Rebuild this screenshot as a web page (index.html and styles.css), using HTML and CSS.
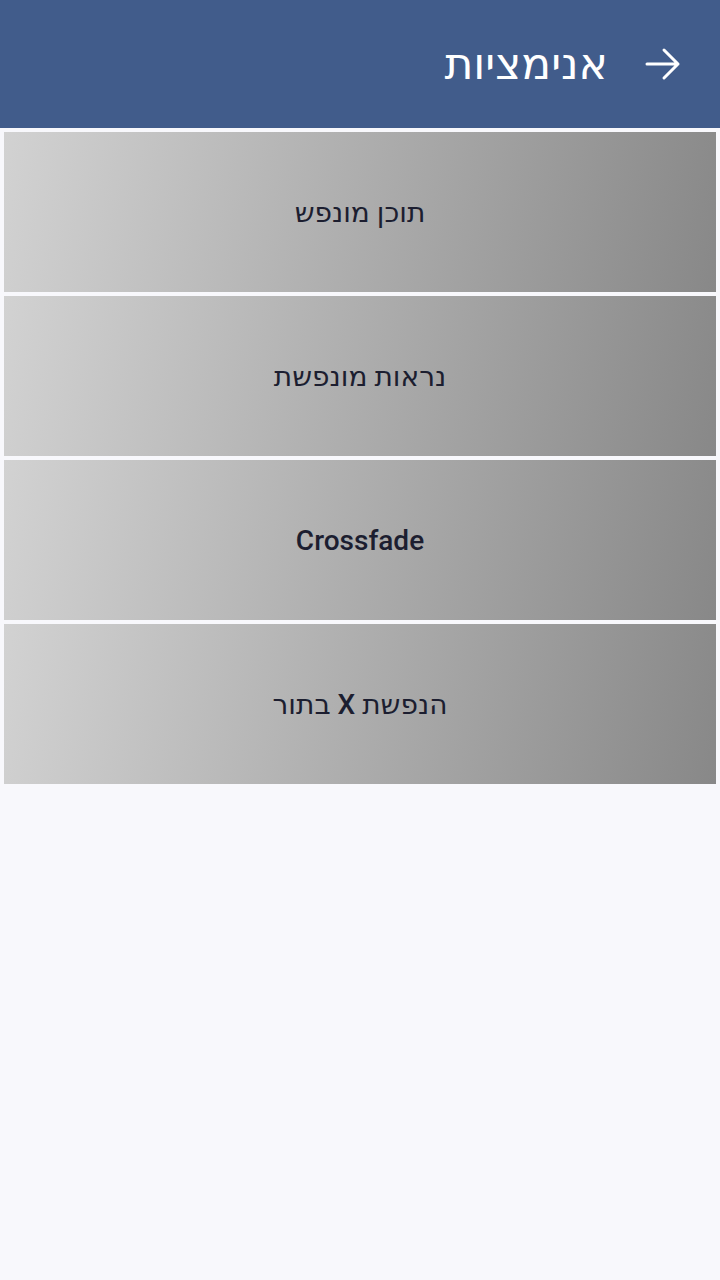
FILE: index.html
```html
<!DOCTYPE html>
<html lang="he" dir="rtl">
<head>
<meta charset="utf-8">
<link rel="stylesheet" href="styles.css">
</head>
<body>
<header class="appbar">
  <svg class="back" width="36" height="36" viewBox="0 0 36 36" aria-hidden="true">
    <path d="M2 18 H33 M19 4 L33 18 L19 32" fill="none" stroke="#fff" stroke-width="3" stroke-linecap="round" stroke-linejoin="round"/>
  </svg>
  <h1 class="title">אנימציות</h1>
</header>
<main class="list">
  <div class="card">תוכן מונפש</div>
  <div class="card">נראות מונפשת</div>
  <div class="card">Crossfade</div>
  <div class="card">הנפשת X בתור</div>
</main>
</body>
</html>
```
FILE: styles.css
```css
html, body {
  margin: 0;
  padding: 0;
  background: #f8f8fc;
  font-family: Roboto, "Noto Sans", "DejaVu Sans", sans-serif;
}
.appbar {
  height: 128px;
  background: #415c8b;
  display: flex;
  align-items: center;
  padding-right: 39px;
  gap: 37px;
  box-sizing: border-box;
}
.back {
  display: block;
  flex: none;
}
.title {
  margin: 0;
  color: #fff;
  font-weight: 400;
  font-size: 44px;
  line-height: 1;
}
.list {
  display: flex;
  flex-direction: column;
  gap: 4px;
  padding: 4px;
}
.card {
  height: 160px;
  display: flex;
  align-items: center;
  justify-content: center;
  background: linear-gradient(100deg, #d2d2d2, #888888);
  color: #1c1e30;
  font-size: 28px;
  font-weight: 500;
}
```
